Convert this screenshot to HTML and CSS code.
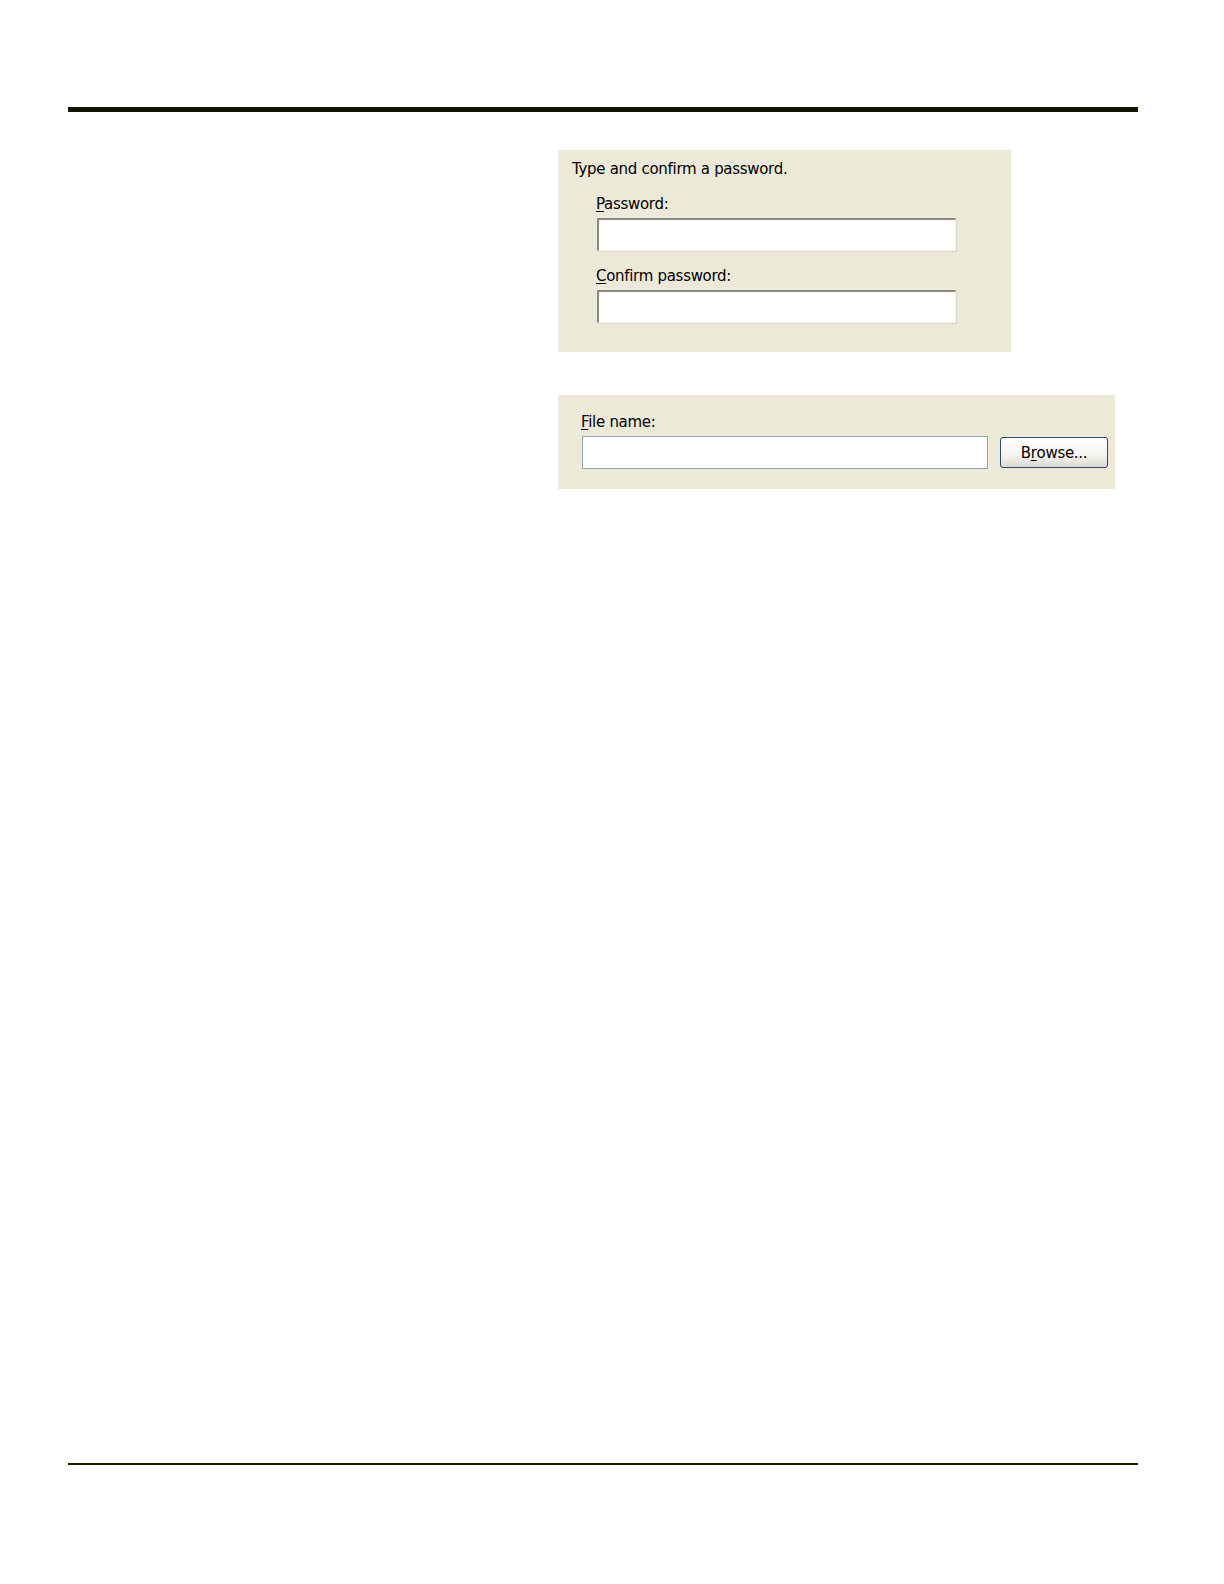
FILE: index.html
```html
<!DOCTYPE html>
<html>
<head>
<meta charset="utf-8">
<link rel="stylesheet" href="styles.css">
</head>
<body>
<div class="page">
  <div class="top-rule"></div>
  <div class="content">
    <div class="panel pw-panel">
      <div class="intro">Type and confirm a password.</div>
      <div class="field">
        <div class="label"><u>P</u>assword:</div>
        <div class="inset-input"></div>
      </div>
      <div class="field">
        <div class="label"><u>C</u>onfirm password:</div>
        <div class="inset-input"></div>
      </div>
    </div>
    <div class="panel file-panel">
      <div class="label"><u>F</u>ile name:</div>
      <div class="file-row">
        <div class="xp-input"></div>
        <div class="xp-button">B<u>r</u>owse...</div>
      </div>
    </div>
  </div>
  <div class="bottom-rule"></div>
</div>
</body>
</html>
```
FILE: styles.css
```css
html, body {
  margin: 0;
  padding: 0;
  background: #ffffff;
  overflow: hidden;
}
.page {
  height: 1560px;
  box-sizing: border-box;
  padding-top: 107px;
  position: relative;
  font-family: "DejaVu Sans", "Liberation Sans", sans-serif;
  color: #000;
}
.top-rule {
  margin-left: 68px;
  width: 1070px;
  height: 5px;
  background: #141400;
}
.content {
  margin-left: 558px;
  padding-top: 38px;
  display: flex;
  flex-direction: column;
  align-items: flex-start;
}
.panel {
  background: #ece9d8;
  box-sizing: border-box;
}
.pw-panel {
  width: 453px;
  height: 202px;
  padding: 9px 0 0 14px;
}
.intro {
  font-size: 15px;
  line-height: 20px;
  letter-spacing: -0.3px;
}
.field {
  margin-left: 24px;
  margin-top: 15px;
}
.field + .field {
  margin-top: 15px;
}
.label {
  font-size: 15px;
  line-height: 20px;
  letter-spacing: -0.3px;
}
.label u, .xp-button u {
  text-decoration-thickness: 1px;
  text-underline-offset: 2px;
}
.inset-input {
  margin-top: 4px;
  margin-left: 1px;
  width: 359px;
  height: 33px;
  box-sizing: border-box;
  background: #ffffff;
  border-top: 2px solid #8a8a80;
  border-left: 2px solid #8a8a80;
  border-right: 1px solid #f4f3ee;
  border-bottom: 1px solid #f4f3ee;
  box-shadow: 1px 1px 0 #d8d6c8;
}
.file-panel {
  margin-top: 43px;
  width: 557px;
  height: 94px;
  padding: 17px 0 0 23px;
}
.file-row {
  margin-top: 4px;
  display: flex;
  align-items: center;
  gap: 12px;
}
.xp-input {
  margin-left: 1px;
  width: 406px;
  height: 33px;
  box-sizing: border-box;
  background: #ffffff;
  border: 1px solid #8ea3b8;
}
.xp-button {
  width: 108px;
  height: 31px;
  box-sizing: border-box;
  border: 1px solid #2b4a6e;
  border-radius: 3px;
  background: linear-gradient(#ffffff, #f4f3ee 60%, #dcdad0);
  font-size: 15px;
  letter-spacing: -0.3px;
  display: flex;
  align-items: center;
  justify-content: center;
  padding-top: 1px;
}
.bottom-rule {
  position: absolute;
  left: 68px;
  top: 1463px;
  width: 1070px;
  height: 2px;
  background: #1a1a00;
}
```
